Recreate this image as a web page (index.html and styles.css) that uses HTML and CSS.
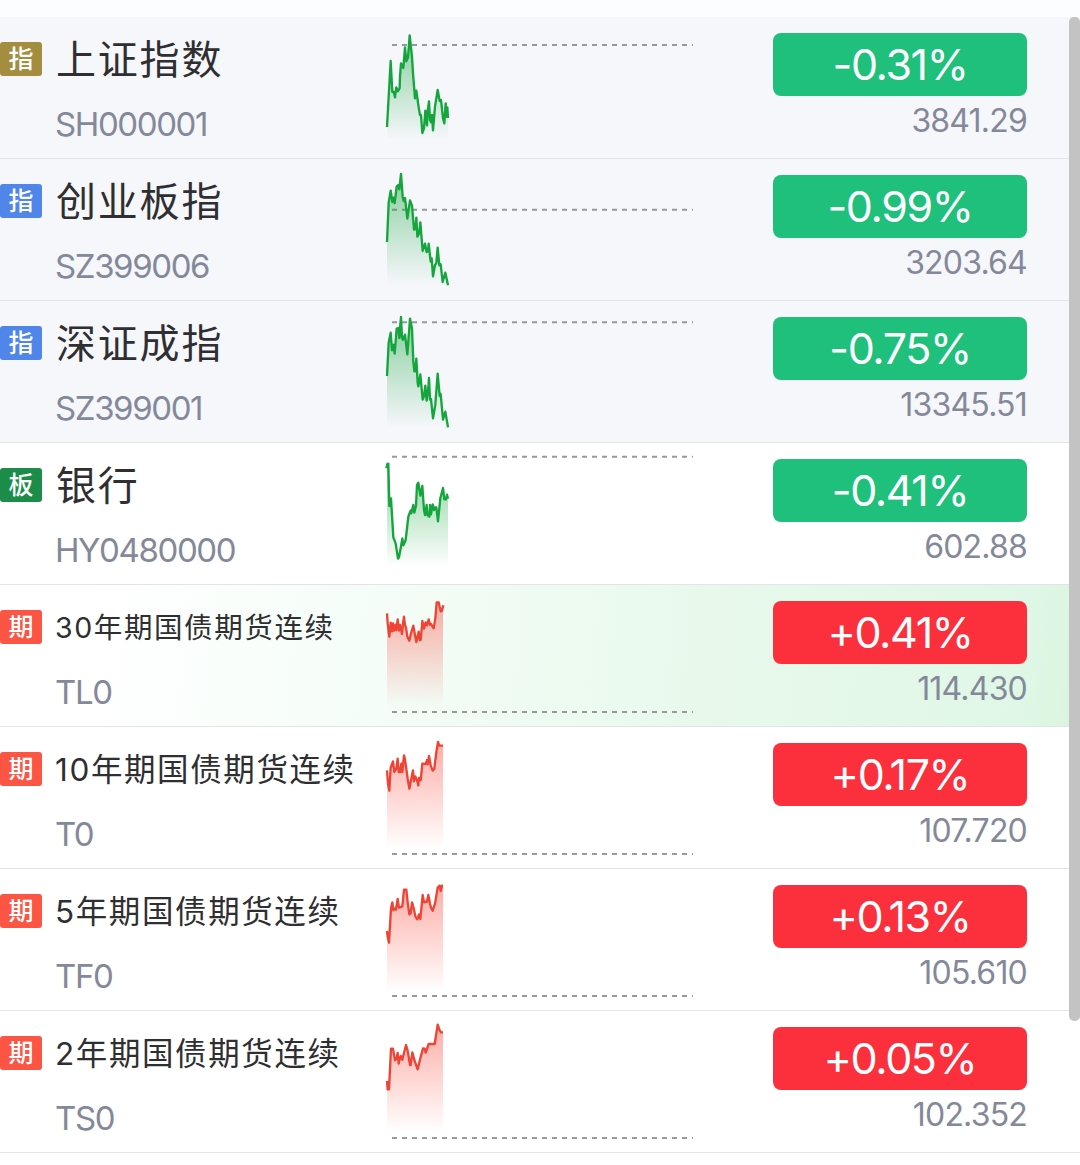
FILE: index.html
```html
<!DOCTYPE html>
<html lang="zh-CN">
<head>
    <meta charset="UTF-8">
    <title>自选行情</title>
    <link rel="stylesheet" href="styles.css">
</head>
<body>
<svg class="defs" width="0" height="0">
    <defs>
        <linearGradient id="down" x1="0" y1="0" x2="0" y2="1">
            <stop offset="0" stop-color="#14a53c" stop-opacity="0.5"/>
            <stop offset="1" stop-color="#14a53c" stop-opacity="0"/>
        </linearGradient>
        <linearGradient id="up" x1="0" y1="0" x2="0" y2="1">
            <stop offset="0" stop-color="#fb3a2c" stop-opacity="0.42"/>
            <stop offset="1" stop-color="#fb3a2c" stop-opacity="0"/>
        </linearGradient>
    </defs>
</svg>
<ul class="list">
    <li class="row top">
        <span class="tag gold">指</span>
        <div class="stock">
            <p class="name">上证指数</p>
            <p class="code">SH000001</p>
        </div>
        <svg class="chart down" viewBox="0 -9 990 423">
            <path class="base" d="M51 75H954"/>
            <path class="area" d="M36 321L47 123L52 216L60 232L64 202L69 214L74 204L78 130L85 144L90 82L94 124L99 112L104 46L111 110L120 235L124 212L131 262L138 285L142 339L147 325L151 272L156 316L162 244L168 307L171 285L174 331L180 260L188 210L194 243L198 240L204 295L208 310L212 250L217 262L219 294V360H36Z"/>
            <path class="line" d="M36 321L47 123L52 216L56 215L60 232L64 202L69 214L74 204L75 170L78 130L85 144L90 82L94 124L99 112L104 46L111 110L114 160L120 235L124 212L131 262L135 285L138 285L142 339L147 325L151 272L156 316L158 275L162 244L165 300L168 307L171 285L174 331L180 260L188 210L194 243L198 240L204 295L208 310L212 250L214 290L217 262L219 294"/>
        </svg>
        <div class="quote">
            <p class="rate green">-0.31%</p>
            <p class="price">3841.29</p>
        </div>
    </li>
    <li class="row top">
        <span class="tag blue">指</span>
        <div class="stock">
            <p class="name">创业板指</p>
            <p class="code">SZ399006</p>
        </div>
        <svg class="chart down" viewBox="0 -18 990 423">
            <path class="base" d="M51 134H954"/>
            <path class="area" d="M36 231L41 113L47 77L52 111L59 114L65 65L73 73L78 27L83 95L90 99L97 161L105 106L111 122L117 194L121 192L124 158L127 215L132 206L136 172L143 258L150 236L155 261L161 236L167 290L170 280L174 334L180 300L188 248L193 301L197 298L203 351L211 323L219 361V361H36Z"/>
            <path class="line" d="M36 231L41 113L47 77L52 111L55 98L59 114L65 65L70 60L73 73L78 27L83 95L86 108L90 99L97 161L105 106L111 122L117 194L121 192L124 158L127 215L132 206L136 172L143 258L150 236L155 261L159 258L161 236L167 290L170 280L174 334L180 300L184 295L188 248L193 301L197 298L203 351L211 323L219 361"/>
        </svg>
        <div class="quote">
            <p class="rate green">-0.99%</p>
            <p class="price">3203.64</p>
        </div>
    </li>
    <li class="row top">
        <span class="tag blue">指</span>
        <div class="stock">
            <p class="name">深证成指</p>
            <p class="code">SZ399001</p>
        </div>
        <svg class="chart down" viewBox="0 -21 990 423">
            <path class="base" d="M51 43H954"/>
            <path class="area" d="M36 204L41 104L47 74L51 127L59 137L65 62L73 90L78 27L84 95L90 80L97 139L105 32L111 62L118 190L124 152L130 235L136 199L143 275L151 233L155 278L162 210L168 273L174 331L181 290L188 197L194 264L197 258L204 335L211 311L219 358V358H36Z"/>
            <path class="line" d="M36 204L41 104L47 74L51 127L55 110L59 137L65 62L70 60L73 90L75 60L78 27L81 90L84 95L90 80L97 139L105 32L111 62L115 160L118 190L121 190L124 152L128 225L130 235L136 199L143 275L147 265L151 233L155 278L160 240L162 210L165 275L168 273L174 331L181 290L188 197L194 264L197 258L204 335L211 311L219 358"/>
        </svg>
        <div class="quote">
            <p class="rate green">-0.75%</p>
            <p class="price">13345.51</p>
        </div>
    </li>
    <li class="row">
        <span class="tag dark">板</span>
        <div class="stock">
            <p class="name">银行</p>
            <p class="code">HY0480000</p>
        </div>
        <svg class="chart down" viewBox="0 -21 990 423">
            <path class="base" d="M51 20H954"/>
            <path class="area" d="M36 55L39 40L43 168L48 145L55 262L62 280L69 326L77 295L82 265L85 286L92 270L100 200L107 181L112 188L122 167L130 98L136 137L142 108L150 195L155 165L160 198L168 165L173 180L180 172L184 172L189 214L196 145L204 114L208 148L219 144V350H36Z"/>
            <path class="line" d="M34 55L37 42L40 41L43 168L48 145L55 262L62 280L69 326L72 322L77 295L82 265L85 286L92 270L100 200L107 181L109 190L115 165L118 188L123 167L126 105L130 98L136 137L142 108L147 180L150 195L155 165L157 195L163 200L165 165L168 193L173 163L177 180L180 172L184 172L189 214L196 145L204 114L208 148L213 148L216 134L219 146"/>
        </svg>
        <div class="quote">
            <p class="rate green">-0.41%</p>
            <p class="price">602.88</p>
        </div>
    </li>
    <li class="row active">
        <span class="tag orange">期</span>
        <div class="stock">
            <p class="name small">30年期国债期货连续</p>
            <p class="code">TL0</p>
        </div>
        <svg class="chart up" viewBox="0 -15 990 423">
            <path class="base" d="M51 366H954"/>
            <path class="area" d="M36 70L43 140L47 98L51 124L57 106L64 120L68 88L75 122L81 132L87 80L93 112L103 152L108 130L115 107L124 156L131 125L137 150L142 93L150 112L156 97L161 88L168 102L176 115L181 85L185 37L191 37L197 64L204 46V350H36Z"/>
            <path class="line" d="M36 70L38 100L43 140L47 98L51 124L54 100L57 122L62 104L64 120L68 88L72 122L75 105L81 132L84 100L87 80L90 106L93 112L97 140L103 152L108 130L115 107L119 130L124 156L131 125L134 150L137 150L142 93L147 116L152 97L156 106L161 88L165 104L168 102L176 115L181 85L185 37L191 37L197 64L201 62L205 46"/>
        </svg>
        <div class="quote">
            <p class="rate red">+0.41%</p>
            <p class="price">114.430</p>
        </div>
    </li>
    <li class="row">
        <span class="tag orange">期</span>
        <div class="stock">
            <p class="name mid">10年期国债期货连续</p>
            <p class="code">T0</p>
        </div>
        <svg class="chart up" viewBox="0 -15 990 423">
            <path class="base" d="M51 366H954"/>
            <path class="area" d="M36 115L43 176L47 107L54 88L58 120L68 80L75 120L80 90L87 70L94 110L103 170L114 115L120 150L130 160L137 145L142 95L152 96L162 72L167 100L173 116L178 110L189 30L193 41H204V350H36Z"/>
            <path class="line" d="M36 115L39 155L43 176L47 107L54 88L58 120L64 110L68 80L71 120L75 120L79 95L82 120L87 70L90 82L98 140L103 170L114 115L117 148L121 133L126 145L130 160L132 138L137 145L142 95L152 96L156 84L158 97L162 72L167 100L173 116L178 110L184 60L189 30L193 41H204"/>
        </svg>
        <div class="quote">
            <p class="rate red">+0.17%</p>
            <p class="price">107.720</p>
        </div>
    </li>
    <li class="row">
        <span class="tag orange">期</span>
        <div class="stock">
            <p class="name mid">5年期国债期货连续</p>
            <p class="code">TF0</p>
        </div>
        <svg class="chart up" viewBox="0 -18 990 423">
            <path class="base" d="M51 363H954"/>
            <path class="area" d="M36 168L42 203L48 100L52 82L58 105L68 72L74 98L82 94L87 44L94 44L103 118L111 82L117 104L127 133L136 126L143 60L150 80L160 60L165 86L173 107L180 86L188 38L194 32L204 32V350H36Z"/>
            <path class="line" d="M36 168L38 185L42 203L48 100L52 82L55 105L61 100L63 104L68 72L72 98L82 94L87 44L94 44L98 82L103 118L107 115L111 82L117 104L121 124L127 133L132 118L136 132L143 60L147 82L156 80L160 60L165 86L168 98L173 107L180 86L188 38L194 32L197 48L201 32L204 32"/>
        </svg>
        <div class="quote">
            <p class="rate red">+0.13%</p>
            <p class="price">105.610</p>
        </div>
    </li>
    <li class="row">
        <span class="tag orange">期</span>
        <div class="stock">
            <p class="name mid">2年期国债期货连续</p>
            <p class="code">TS0</p>
        </div>
        <svg class="chart up" viewBox="0 -12 990 423">
            <path class="base" d="M51 369H954"/>
            <path class="area" d="M36 198L42 223L48 101H54L60 136L68 114L75 145L82 125L93 90L98 107L105 150L112 112L128 163L144 100L152 113L161 87H179L188 29L197 50H204V350H36Z"/>
            <path class="line" d="M36 198L38 223H42L48 101H54L60 136L65 130L68 114L71 146L77 123L82 134L93 90L98 107L105 150L107 150L112 112L118 135L128 163L136 130L144 100L149 101L152 113L161 87H179L188 29L194 46L198 52H204"/>
        </svg>
        <div class="quote">
            <p class="rate red">+0.05%</p>
            <p class="price">102.352</p>
        </div>
    </li>
</ul>
<div class="scrollbar"></div>
</body>
</html>
```
FILE: styles.css
```css
*{
    margin: 0;
    padding: 0;
    box-sizing: border-box;
}
body{
    position: relative;
    height: 1165px;
    overflow: hidden;
    padding-top: 17px;
    background: #fff linear-gradient(#fcfdff, #fcfdff) no-repeat 0 0 / 100% 17px;
    font-family: Inter, "Noto Sans CJK SC", sans-serif;
}
.defs{
    position: absolute;
}
.list{
    list-style: none;
}
.row{
    display: grid;
    grid-template-columns: 55px 320px 330px 1fr;
    height: 142px;
    padding-right: 53px;
    border-bottom: 1px solid #e3e4e8;
}
.row.top{
    background: #f6f7fb;
}
.row.active{
    background: linear-gradient(95deg, #fff 8%, #f4fdf7 36%, #e8f9ec 65%, #e0f7e7 94%, #d9f5dd 100%);
}
.tag{
    width: 42px;
    height: 34px;
    margin-top: 25px;
    border-radius: 3px;
    color: #fff;
    font-size: 25px;
    font-weight: 500;
    line-height: 35px;
    text-align: center;
}
.gold{
    background: #a58d40;
}
.blue{
    background: #5085ea;
}
.dark{
    background: #1c8c49;
}
.orange{
    background: #fc5544;
}
.name{
    height: 84px;
    padding-left: 1px;
    color: #2f2f31;
    font-size: 40px;
    line-height: 86px;
    letter-spacing: 1.8px;
    white-space: nowrap;
}
.name.small{
    padding-left: 0;
    font-size: 28.5px;
    letter-spacing: 1.6px;
}
.name.mid{
    padding-left: 0;
    font-size: 31.5px;
    line-height: 85px;
    letter-spacing: 1.6px;
}
.code{
    color: #84899a;
    font-size: 33px;
    line-height: 46px;
    letter-spacing: -1.4px;
}
.chart{
    width: 330px;
    height: 141px;
    fill: none;
}
.base{
    stroke: #999;
    stroke-width: 6;
    stroke-dasharray: 15 15;
}
.line{
    stroke-width: 7;
    stroke-linejoin: round;
}
.down .line{
    stroke: #14a53c;
}
.down .area{
    fill: url(#down);
}
.up .line{
    stroke: #ee4435;
}
.up .area{
    fill: url(#up);
}
.quote{
    width: 254px;
    margin: 16px 0 0 auto;
    text-align: right;
}
.rate{
    height: 63px;
    border-radius: 8px;
    color: #fff;
    font-size: 43px;
    line-height: 63px;
    letter-spacing: -1.4px;
    text-align: center;
}
.green{
    background: #1ec07c;
}
.red{
    background: #fc303c;
}
.price{
    color: #84899a;
    font-size: 32px;
    line-height: 49px;
    letter-spacing: -0.8px;
}
.scrollbar{
    position: absolute;
    top: 17px;
    right: 0;
    width: 11px;
    height: 1004px;
    border-radius: 5px;
    background: #c3c3c3;
}
```
